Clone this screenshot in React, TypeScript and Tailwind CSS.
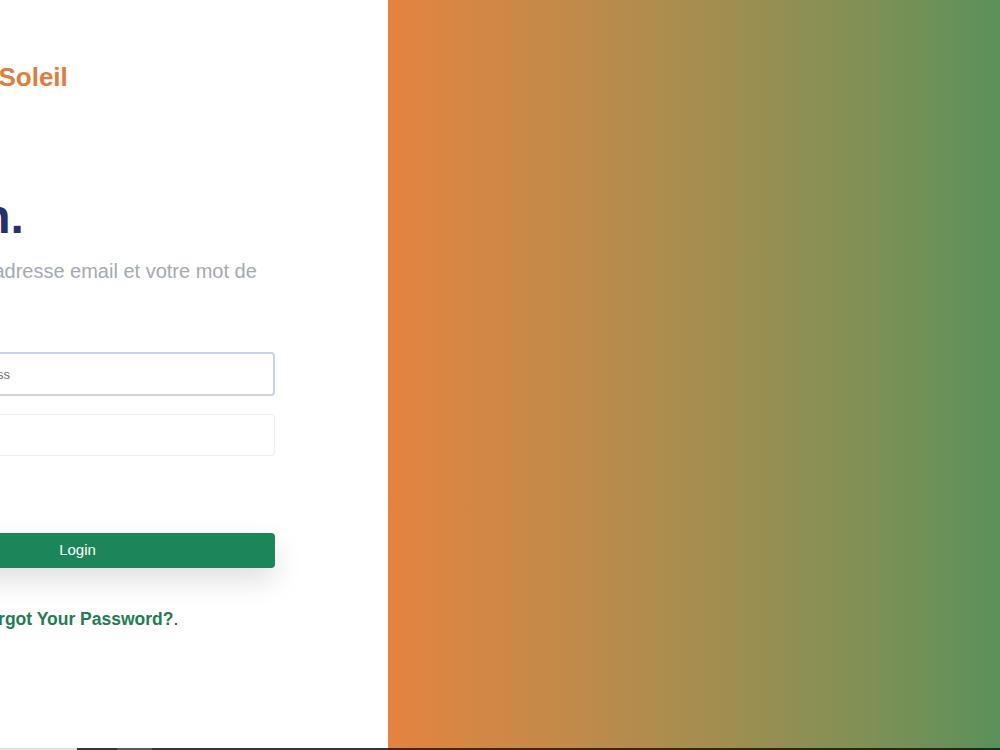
import React from 'react';

const font = { fontFamily: '"Liberation Sans", Arial, sans-serif' };

export default function App() {
  return (
    <div className="w-full h-[750px] flex flex-col overflow-hidden bg-white" style={font}>
      <div className="flex flex-1 min-h-0">
        {/* Left: login form (scrolled, partly out of view) */}
        <div className="w-[388px] shrink-0 bg-white overflow-hidden">
          <div className="-ml-[120px] w-[395px] flex flex-col">
            <div className="mt-[64px] text-[26px] leading-[26px] font-bold text-[#df7d3b] whitespace-nowrap">
              Camping&nbsp;Soleil
            </div>

            <h1 className="mt-[103px] text-[48px] leading-none font-bold text-[#24316a]">Login.</h1>

            <p className="mt-[15px] text-[20px] leading-[30px] text-[#a5a9b8]">
              Entrez votre adresse email et votre mot de passe
            </p>

            <form className="mt-[36px] flex flex-col" onSubmit={(e) => e.preventDefault()}>
              <input
                type="email"
                placeholder="Email Address"
                className="h-[44px] w-full rounded-[4px] border-2 border-[#c9d1ec] pl-[45px] pr-3 text-[13px] text-[#555] placeholder:text-[#6f6f6f] outline-none"
              />
              <input
                type="password"
                placeholder=""
                className="mt-[18px] h-[42px] w-full rounded-[4px] border border-[#eceef2] px-3 text-[13px] outline-none"
              />
              <button
                type="submit"
                className="mt-[77px] h-[35px] w-full rounded-[4px] bg-[#1b8657] text-white text-[15px] shadow-[0_12px_28px_rgba(0,0,0,0.13)]"
              >
                Login
              </button>
            </form>

            <p className="mt-[38px] text-center text-[17.5px] text-[#333]">
              <a href="#" className="font-bold text-[#1e7d52]">Forgot Your Password?</a>.
            </p>
          </div>
        </div>

        {/* Right: gradient panel */}
        <div className="flex-1 bg-gradient-to-r from-[#e5833f] to-[#5a915a]" />
      </div>

      {/* horizontal scrollbar strip */}
      <div className="h-[2px] flex shrink-0">
        <div className="w-[77px] bg-[#e2e2e2]" />
        <div className="w-[40px] bg-[#363636]" />
        <div className="w-[35px] bg-[#5a5a5a]" />
        <div className="w-[236px] bg-[#363636]" />
        <div className="flex-1 bg-gradient-to-r from-[#e5833f] to-[#5a915a]">
          <div className="h-full bg-black/70" />
        </div>
      </div>
    </div>
  );
}
